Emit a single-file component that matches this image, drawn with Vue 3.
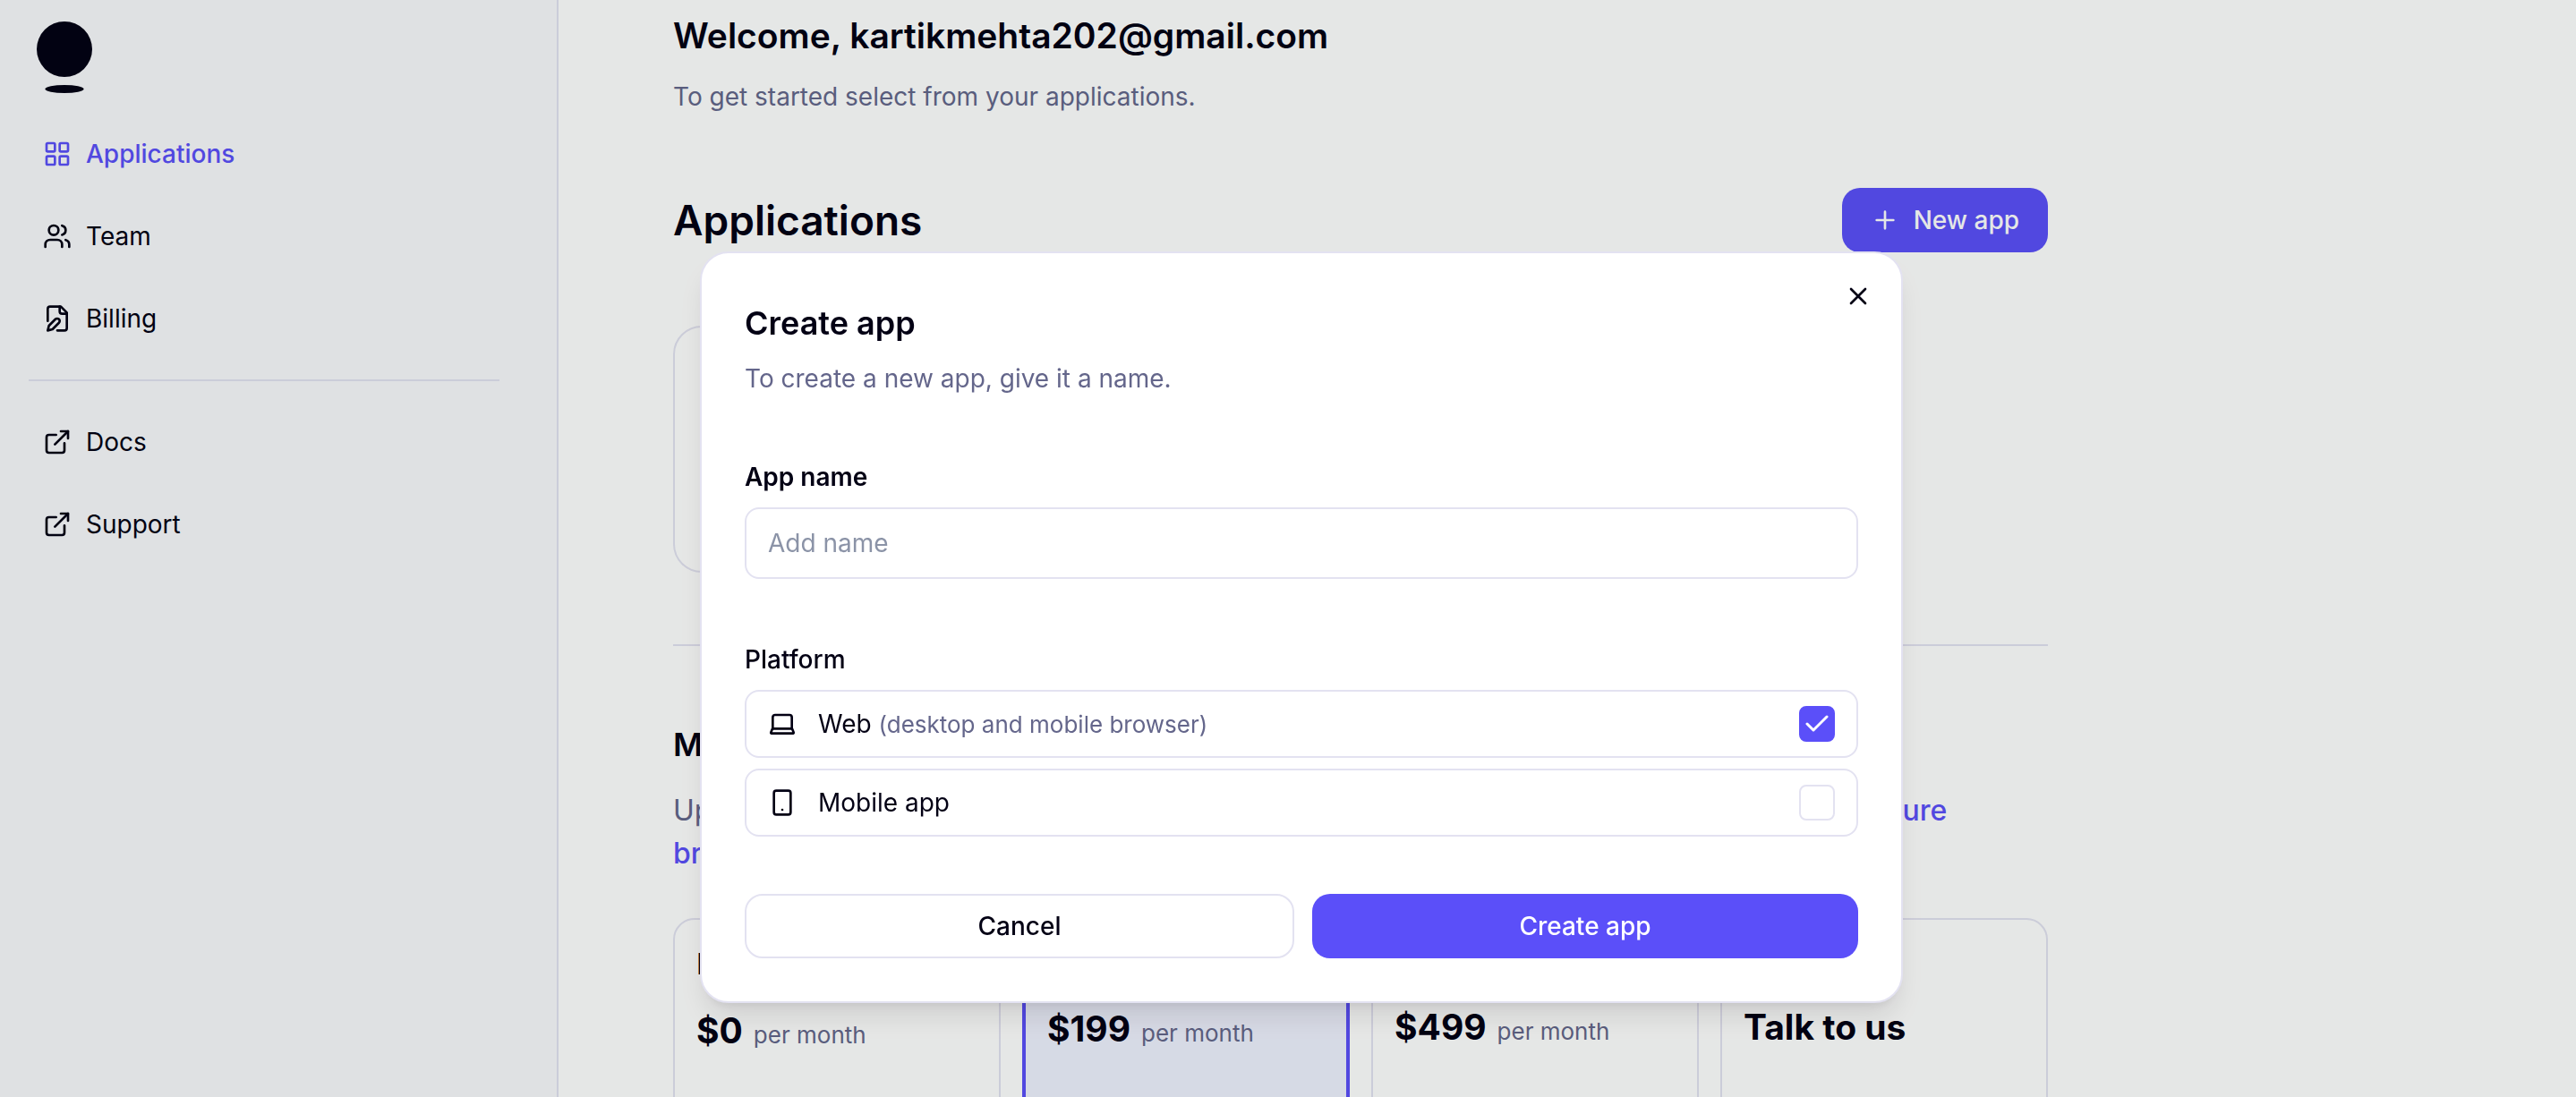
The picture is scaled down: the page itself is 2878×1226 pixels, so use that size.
<script setup>
import { ref } from 'vue'

const primaryNav = [
  { label: 'Applications', icon: 'grid', active: true },
  { label: 'Team', icon: 'users' },
  { label: 'Billing', icon: 'file' },
]
const secondaryNav = ['Docs', 'Support']

const plans = [
  { name: 'Free', badge: 'Current', price: '$0', unit: 'per month' },
  { name: 'Growth', price: '$199', unit: 'per month', selected: true },
  { name: 'Scale', price: '$499', unit: 'per month' },
  { name: 'Enterprise', price: 'Talk to us' },
]

const appName = ref('')
const web = ref(true)
const mobile = ref(false)
</script>

<template>
  <div class="page">
    <aside class="sidebar">
      <svg class="logo" viewBox="0 0 62 80" aria-hidden="true">
        <circle cx="31" cy="31" r="31" />
        <ellipse cx="31" cy="75.5" rx="21.5" ry="4.5" />
      </svg>
      <nav class="nav">
        <a v-for="item in primaryNav" :key="item.label" href="#" class="nav-link" :class="{ active: item.active }">
          <svg v-if="item.icon === 'grid'" class="icon" viewBox="0 0 24 24">
            <rect x="3" y="3" width="7" height="7" rx="1" /><rect x="14" y="3" width="7" height="7" rx="1" />
            <rect x="14" y="14" width="7" height="7" rx="1" /><rect x="3" y="14" width="7" height="7" rx="1" />
          </svg>
          <svg v-else-if="item.icon === 'users'" class="icon" viewBox="0 0 24 24">
            <path d="M16 21v-2a4 4 0 0 0-4-4H6a4 4 0 0 0-4 4v2" /><circle cx="9" cy="7" r="4" />
            <path d="M22 21v-2a4 4 0 0 0-3-3.87" /><path d="M16 3.13a4 4 0 0 1 0 7.75" />
          </svg>
          <svg v-else class="icon" viewBox="0 0 24 24">
            <path d="M12 22h6a2 2 0 0 0 2-2V7l-5-5H6a2 2 0 0 0-2 2v10" /><path d="M14 2v4a2 2 0 0 0 2 2h4" />
            <path d="M10.4 12.6a2 2 0 1 1 3 3L8 21l-4 1 1-4Z" />
          </svg>
          {{ item.label }}
        </a>
        <hr class="rule" />
        <a v-for="label in secondaryNav" :key="label" href="#" class="nav-link">
          <svg class="icon" viewBox="0 0 24 24">
            <path d="M15 3h6v6" /><path d="M10 14 21 3" />
            <path d="M18 13v6a2 2 0 0 1-2 2H5a2 2 0 0 1-2-2V8a2 2 0 0 1 2-2h6" />
          </svg>
          {{ label }}
        </a>
      </nav>
    </aside>

    <main class="main">
      <div class="content">
        <h1 class="welcome">Welcome, kartikmehta202@gmail.com</h1>
        <p class="lead">To get started select from your applications.</p>
        <div class="section-head">
          <h2 class="section-title">Applications</h2>
          <button type="button" class="btn primary new-app">
            <svg class="icon" viewBox="0 0 24 24"><path d="M5 12h14M12 5v14" /></svg>
            New app
          </button>
        </div>
        <div class="app-card"></div>
        <hr class="rule" />
        <h3 class="plan-title">Manage plan</h3>
        <p class="plan-text">
          Upgrade your plan now to unlock larger limits and advanced features for your apps. <a href="#">Configure branding</a>
        </p>
        <div class="plans">
          <section v-for="plan in plans" :key="plan.name" class="plan" :class="{ selected: plan.selected }">
            <div class="plan-head">
              <span>{{ plan.name }}</span>
              <span v-if="plan.badge" class="badge">{{ plan.badge }}</span>
            </div>
            <p class="price">{{ plan.price }} <small v-if="plan.unit">{{ plan.unit }}</small></p>
          </section>
        </div>
      </div>
    </main>

    <div class="overlay">
      <form class="modal" role="dialog" aria-labelledby="modal-title" @submit.prevent>
        <button type="button" class="close" aria-label="Close">
          <svg class="icon" viewBox="0 0 24 24"><path d="M18 6 6 18M6 6l12 12" /></svg>
        </button>
        <h2 id="modal-title" class="modal-title">Create app</h2>
        <p class="modal-text">To create a new app, give it a name.</p>

        <label class="label strong" for="app-name">App name</label>
        <input id="app-name" v-model="appName" class="field" type="text" placeholder="Add name" />

        <fieldset class="platforms">
          <legend class="label">Platform</legend>
          <label class="option">
            <svg class="icon" viewBox="0 0 24 24">
              <path d="M4 16V6.500a2 2 0 0 1 2-2h12a2 2 0 0 1 2 2V16" />
              <path d="M3.800 16h16.400l1.300 3.200a.6.6 0 0 1-.5.800H3a.6.6 0 0 1-.5-.800z" />
            </svg>
            <span class="option-text">Web <small>(desktop and mobile browser)</small></span>
            <span class="tick">
              <input v-model="web" type="checkbox" />
              <svg viewBox="0 0 40 40" aria-hidden="true"><path d="M9 20l7 7L31 12" /></svg>
            </span>
          </label>
          <label class="option">
            <svg class="icon" viewBox="0 0 24 24">
              <rect x="5" y="2" width="14" height="20" rx="2" /><path d="M12 18h.01" />
            </svg>
            <span class="option-text">Mobile app</span>
            <span class="tick">
              <input v-model="mobile" type="checkbox" />
              <svg viewBox="0 0 40 40" aria-hidden="true"><path d="M9 20l7 7L31 12" /></svg>
            </span>
          </label>
        </fieldset>

        <div class="actions">
          <button type="button" class="btn secondary">Cancel</button>
          <button type="submit" class="btn primary">Create app</button>
        </div>
      </form>
    </div>
  </div>
</template>

<style>
html,
body {
  height: 100%;
  overflow: hidden;
}
#app {
  height: 100%;
}
</style>

<style scoped>
.page {
  --ink: #030014;
  --muted: #64668b;
  --line: #e3e2f1;
  --accent: #5b4ff9;
  display: flex;
  height: 100%;
  overflow: hidden;
  background: #fff;
  color: var(--ink);
  font-family: Inter, sans-serif;
  font-size: 28px;
  line-height: 40px;
}
.page * {
  box-sizing: border-box;
}
h1, h2, h3, p {
  margin: 0;
}
button, input {
  font: inherit;
  color: inherit;
}
.icon {
  flex: none;
  width: 32px;
  height: 32px;
  fill: none;
  stroke: currentColor;
  stroke-width: 2;
  stroke-linecap: round;
  stroke-linejoin: round;
}
.rule {
  width: 100%;
  height: 2px;
  margin: 0;
  border: 0;
  background: var(--line);
}

.sidebar {
  flex: none;
  width: 624px;
  padding: 24px 64px 0 32px;
  border-right: 2px solid var(--line);
  background: #f9f9fc;
}
.logo {
  display: block;
  width: 62px;
  height: 80px;
  margin: 0 0 22px 9px;
  fill: var(--ink);
}
.nav-link {
  display: flex;
  align-items: center;
  gap: 16px;
  height: 92px;
  padding: 0 16px;
  color: inherit;
  text-decoration: none;
}
.nav-link.active {
  color: var(--accent);
  font-weight: 500;
}
.nav .rule {
  margin: 22px 0;
}

.main {
  flex: 1;
  min-width: 0;
  padding: 16px 128px 0;
}
.content {
  max-width: 1536px;
}
.welcome {
  font-size: 39px;
  font-weight: 600;
  line-height: 48px;
}
.lead {
  margin-top: 24px;
  color: var(--muted);
}
.section-head {
  display: flex;
  align-items: center;
  justify-content: space-between;
  margin-top: 82px;
}
.section-title {
  font-size: 46px;
  font-weight: 600;
  line-height: 56px;
}
.btn {
  height: 72px;
  border: 0;
  border-radius: 20px;
  font-weight: 500;
}
.primary {
  background: var(--accent);
  color: #fff;
}
.new-app {
  display: flex;
  align-items: center;
  gap: 16px;
  padding: 0 32px;
}
.app-card {
  width: 496px;
  height: 276px;
  margin: 82px 0 80px;
  border: 2px solid var(--line);
  border-radius: 32px;
}
.plan-title {
  margin-top: 86px;
  font-size: 36px;
  font-weight: 600;
  line-height: 48px;
}
.plan-text {
  margin-top: 26px;
  color: var(--muted);
  font-size: 32px;
  line-height: 48px;
}
.plan-text a {
  color: var(--accent);
  font-weight: 500;
  text-decoration: none;
}
.plans {
  display: grid;
  grid-template-columns: repeat(4, 1fr);
  gap: 24px;
  margin-top: 48px;
}
.plan {
  height: 600px;
  padding: 24px;
  border: 2px solid var(--line);
  border-radius: 24px;
}
.plan.selected {
  border: 4px solid var(--accent);
  background: #eff1fe;
}
.plan-head {
  display: flex;
  align-items: center;
  justify-content: space-between;
  font-size: 32px;
  font-weight: 500;
  line-height: 48px;
}
.badge {
  padding: 6px 16px;
  border-radius: 8px;
  background: var(--line);
  font-size: 24px;
  line-height: 40px;
}
.price {
  display: flex;
  align-items: baseline;
  gap: 12px;
  margin-top: 24px;
  font-size: 39px;
  font-weight: 700;
  line-height: 48px;
}
.price small {
  color: var(--muted);
  font-size: 26px;
  font-weight: 400;
}

.overlay {
  position: fixed;
  inset: 0;
  display: flex;
  align-items: flex-start;
  justify-content: center;
  padding: 281px 0 0 30px;
  background: rgba(2, 20, 10, 0.1);
}
.modal {
  position: relative;
  width: 1344px;
  max-width: 100%;
  padding: 48px;
  border: 2px solid var(--line);
  border-radius: 32px;
  background: #fff;
  box-shadow: 0 20px 30px -6px rgba(0, 0, 0, 0.1), 0 8px 12px -8px rgba(0, 0, 0, 0.1);
}
.close {
  position: absolute;
  top: 32px;
  right: 32px;
  display: flex;
  padding: 0;
  border: 0;
  background: none;
}
.modal-title {
  margin-top: 8px;
  font-size: 36px;
  font-weight: 600;
  line-height: 44px;
}
.modal-text {
  margin-top: 20px;
  color: var(--muted);
}
.label {
  display: block;
  padding: 0;
  font-weight: 500;
}
.label.strong {
  margin-top: 70px;
  font-weight: 600;
}
.field {
  display: block;
  width: 100%;
  height: 80px;
  margin-top: 14px;
  padding: 0 24px;
  border: 2px solid var(--line);
  border-radius: 16px;
  background: #fff;
}
.field::placeholder {
  color: #8b93a7;
  opacity: 1;
}
.platforms {
  display: flex;
  flex-direction: column;
  gap: 12px;
  margin: 70px 0 0;
  padding: 0;
  border: 0;
}
.platforms .label {
  margin-bottom: 14px;
}
.option {
  display: flex;
  align-items: center;
  height: 76px;
  padding: 0 24px;
  border: 2px solid var(--line);
  border-radius: 16px;
}
.option-text {
  flex: 1;
  margin-left: 24px;
}
.option small {
  color: var(--muted);
  font-size: 26px;
}
.tick {
  display: grid;
  width: 40px;
  height: 40px;
}
.tick > * {
  grid-area: 1 / 1;
}
.tick input {
  width: 40px;
  height: 40px;
  margin: 0;
  border: 2px solid var(--line);
  border-radius: 8px;
  appearance: none;
  background: #fff;
}
.tick input:checked {
  border-color: var(--accent);
  background: var(--accent);
}
.tick svg {
  z-index: 1;
  display: none;
  fill: none;
  stroke: #fff;
  stroke-width: 3;
  stroke-linecap: round;
  stroke-linejoin: round;
  pointer-events: none;
}
.tick input:checked + svg {
  display: block;
}
.actions {
  display: flex;
  gap: 20px;
  margin-top: 64px;
}
.actions .btn {
  flex: 1;
  padding: 0;
}
.secondary {
  border: 2px solid var(--line);
  background: #fff;
}
</style>
